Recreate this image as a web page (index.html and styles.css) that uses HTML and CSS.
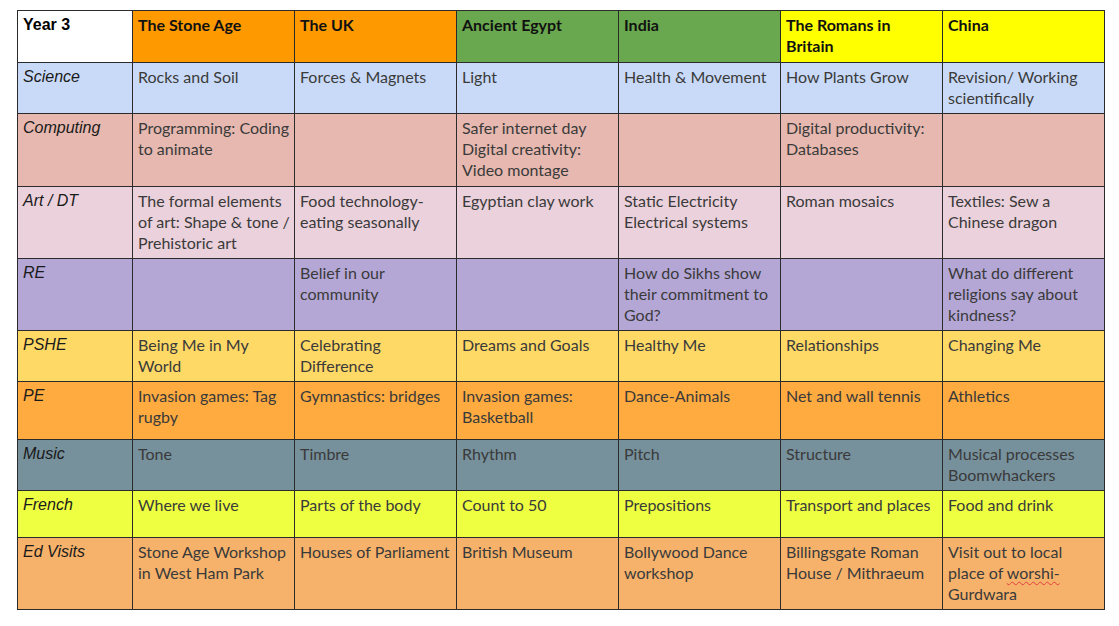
FILE: index.html
```html
<!DOCTYPE html>
<html lang="en">
<head>
<meta charset="utf-8">
<title>Year 3 Curriculum</title>
<link rel="stylesheet" href="styles.css">
</head>
<body>
<div class="page">
<table class="plan">
  <colgroup>
    <col class="c-label"><col class="c"><col class="c"><col class="c"><col class="c"><col class="c"><col class="c">
  </colgroup>
  <tr class="r-head">
    <th class="year">Year 3</th>
    <th class="h-orange">The Stone Age</th>
    <th class="h-orange">The UK</th>
    <th class="h-green">Ancient Egypt</th>
    <th class="h-green">India</th>
    <th class="h-yellow">The Romans in Britain</th>
    <th class="h-yellow">China</th>
  </tr>
  <tr class="r-science">
    <td class="label">Science</td>
    <td>Rocks and Soil</td>
    <td>Forces &amp; Magnets</td>
    <td>Light</td>
    <td>Health &amp; Movement</td>
    <td>How Plants Grow</td>
    <td>Revision/ Working scientifically</td>
  </tr>
  <tr class="r-computing">
    <td class="label">Computing</td>
    <td>Programming: Coding to animate</td>
    <td></td>
    <td>Safer internet day<br>Digital creativity: Video montage</td>
    <td></td>
    <td>Digital productivity: Databases</td>
    <td></td>
  </tr>
  <tr class="r-art">
    <td class="label">Art / DT</td>
    <td>The formal elements of art: Shape &amp; tone / Prehistoric art</td>
    <td>Food technology-eating seasonally</td>
    <td>Egyptian clay work</td>
    <td>Static Electricity<br>Electrical systems</td>
    <td>Roman mosaics</td>
    <td>Textiles: Sew a Chinese dragon</td>
  </tr>
  <tr class="r-re">
    <td class="label">RE</td>
    <td></td>
    <td>Belief in our community</td>
    <td></td>
    <td>How do Sikhs show their commitment to God?</td>
    <td></td>
    <td>What do different religions say about kindness?</td>
  </tr>
  <tr class="r-pshe">
    <td class="label">PSHE</td>
    <td>Being Me in My World</td>
    <td>Celebrating Difference</td>
    <td>Dreams and Goals</td>
    <td>Healthy Me</td>
    <td>Relationships</td>
    <td>Changing Me</td>
  </tr>
  <tr class="r-pe">
    <td class="label">PE</td>
    <td>Invasion games: Tag rugby</td>
    <td>Gymnastics: bridges</td>
    <td>Invasion games: Basketball</td>
    <td>Dance-Animals</td>
    <td>Net and wall tennis</td>
    <td>Athletics</td>
  </tr>
  <tr class="r-music">
    <td class="label">Music</td>
    <td>Tone</td>
    <td>Timbre</td>
    <td>Rhythm</td>
    <td>Pitch</td>
    <td>Structure</td>
    <td>Musical processes Boomwhackers</td>
  </tr>
  <tr class="r-french">
    <td class="label">French</td>
    <td>Where we live</td>
    <td>Parts of the body</td>
    <td>Count to 50</td>
    <td>Prepositions</td>
    <td>Transport and places</td>
    <td>Food and drink</td>
  </tr>
  <tr class="r-visits">
    <td class="label">Ed Visits</td>
    <td>Stone Age Workshop in West Ham Park</td>
    <td>Houses of Parliament</td>
    <td>British Museum</td>
    <td>Bollywood Dance workshop</td>
    <td>Billingsgate Roman House / Mithraeum</td>
    <td>Visit out to local place of <span class="spell">worshi-</span><br>Gurdwara</td>
  </tr>
</table>
</div>
</body>
</html>
```

FILE: styles.css
```css
html, body {
  margin: 0;
  padding: 0;
  background: #ffffff;
}

.page {
  padding: 10px 0 0 17px;
}

.plan {
  border-collapse: collapse;
  table-layout: fixed;
  width: 1087px;
  font-family: Lato, "Open Sans", sans-serif;
  font-size: 16px;
  line-height: 21px;
  color: #3a3a3a;
}

.c-label { width: 115px; }
.c { width: 162px; }

.plan th,
.plan td {
  border: 1px solid #2b2b2b;
  vertical-align: top;
  text-align: left;
  padding: 3px 3px 0 5px;
}

.plan th {
  font-weight: bold;
  color: #111111;
}

.plan .label,
.plan .year {
  font-family: "Liberation Sans", Arial, sans-serif;
  font-size: 16px;
  font-style: italic;
  color: #1a1a1a;
  padding-left: 5px;
}

.plan .year {
  font-style: normal;
  font-weight: bold;
  color: #000000;
}

.h-orange { background: #ff9900; }
.h-green { background: #6aa84f; }
.h-yellow { background: #ffff00; }
.year { background: #ffffff; }

.r-head { height: 52px; }
.r-science { height: 51px; }
.r-computing { height: 73px; }
.r-art { height: 72px; }
.r-re { height: 72px; }
.r-pshe { height: 51px; }
.r-pe { height: 58px; }
.r-music { height: 51px; }
.r-french { height: 47px; }
.r-visits { height: 72px; }

.r-science td { background: #c9daf8; }
.r-computing td { background: #e6b8af; }
.r-art td { background: #ead1dc; }
.r-re td { background: #b4a7d6; }
.r-pshe td { background: #ffd966; }
.r-pe td { background: #ffab40; }
.r-music td { background: #76909c; }
.r-french td { background: #eeff41; }
.r-visits td { background: #f6b26b; }

.spell {
  text-decoration: underline wavy #e04040;
  text-decoration-thickness: 1px;
  text-underline-offset: 2px;
}
```
